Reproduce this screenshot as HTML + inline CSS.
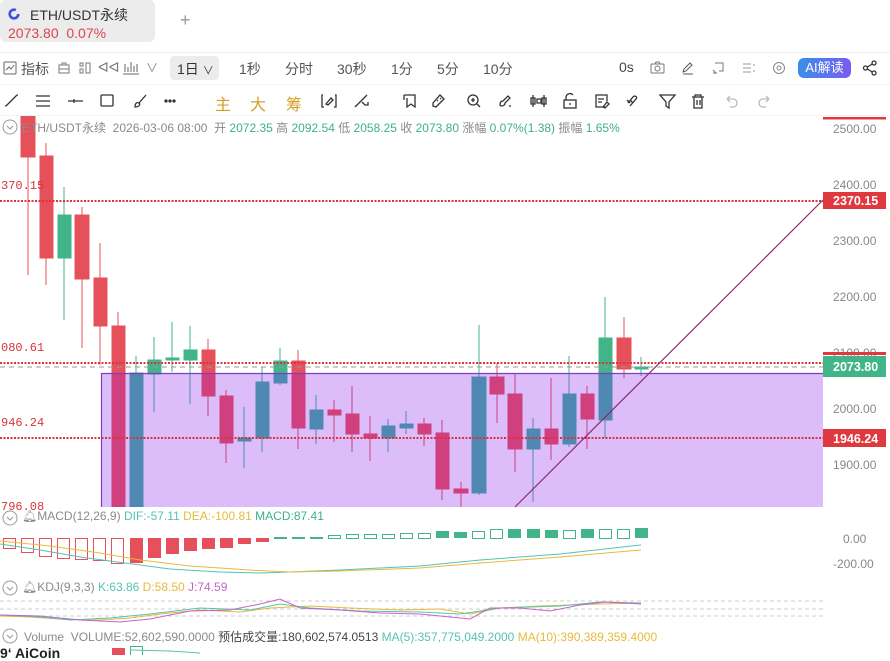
<!DOCTYPE html>
<html><head><meta charset="utf-8"><style>
*{margin:0;padding:0;box-sizing:border-box}
body{width:890px;height:655px;overflow:hidden;background:#fff;font-family:"Liberation Sans","Noto Sans CJK SC",sans-serif;position:relative}
.a{position:absolute;white-space:nowrap}
.tb{font-size:14px;color:#555}
.g{color:#3fb08a}.gr{color:#8a8a8a}
</style></head><body>
<div class="a" style="left:0;top:0;width:155px;height:42px;background:#ececec;border-radius:6px"></div>
<svg class="a" style="left:8px;top:8px" width="12" height="12" viewBox="0 0 12 12"><circle cx="6" cy="6" r="4.3" fill="none" stroke="#3a56d8" stroke-width="2.6" stroke-dasharray="22 5"/></svg>
<div class="a" style="left:30px;top:5px;font-size:14px;color:#333">ETH/USDT永续</div>
<div class="a" style="left:8px;top:25px;font-size:14px;color:#e0434d">2073.80&nbsp; 0.07%</div>
<div class="a" style="left:180px;top:10px;font-size:18px;color:#999">+</div>
<div class="a" style="left:0;top:52px;width:890px;height:1px;background:#f0f0f0"></div>

<!-- row1 -->
<svg class="a" style="left:3px;top:61px" width="14" height="14" viewBox="0 0 14 14" fill="none" stroke="#666"><rect x="1" y="1" width="12" height="12" rx="1"/><path d="M3 9l3-3 2 2 3-4"/></svg>
<div class="a tb" style="left:21px;top:59px">指标</div>
<svg class="a" style="left:58px;top:62px" width="12" height="12" fill="none" stroke="#777"><rect x="1" y="3" width="10" height="8"/><path d="M4 3V1h4v2M1 7h10"/></svg>
<svg class="a" style="left:79px;top:62px" width="12" height="12" fill="none" stroke="#777"><rect x="1" y="1" width="3" height="3"/><rect x="1" y="7" width="3" height="4"/><rect x="7" y="1" width="4" height="10"/></svg>
<div class="a" style="left:98px;top:59px;font-size:14px;color:#777">ᐊᐊ</div>
<svg class="a" style="left:122px;top:60px" width="18" height="16" fill="none" stroke="#666"><path d="M1 14h16M3 12V4M6 12V7M9 12V2M12 12V6M15 12V4"/></svg>
<div class="a" style="left:146px;top:59px;font-size:12px;color:#888">∨</div>
<div class="a" style="left:170px;top:56px;width:49px;height:24px;background:#ececec;border-radius:4px"></div>
<div class="a tb" style="left:177px;top:59px;color:#333">1日 <span style="font-size:11px">∨</span></div>
<div class="a tb" style="left:239px;top:59px">1秒</div>
<div class="a tb" style="left:285px;top:59px">分时</div>
<div class="a tb" style="left:337px;top:59px">30秒</div>
<div class="a tb" style="left:391px;top:59px">1分</div>
<div class="a tb" style="left:437px;top:59px">5分</div>
<div class="a tb" style="left:483px;top:59px">10分</div>
<div class="a tb" style="left:619px;top:59px;color:#444">0s</div>
<svg class="a" style="left:650px;top:61px" width="15" height="13" fill="none" stroke="#777"><rect x="1" y="3" width="13" height="9" rx="1"/><circle cx="7.5" cy="7.5" r="2.5"/><path d="M5 3l1-2h3l1 2"/></svg>
<svg class="a" style="left:681px;top:61px" width="14" height="14" fill="none" stroke="#555"><path d="M2 11l1-3 6-6 2 2-6 6zM2 13h10"/></svg>
<svg class="a" style="left:711px;top:61px" width="14" height="14" fill="none" stroke="#777"><path d="M4 2h8v8H8M2 9l3 3M2 12h4"/></svg>
<svg class="a" style="left:742px;top:62px" width="14" height="12" fill="none" stroke="#999"><path d="M1 2h8M1 6h8M1 10h8M12 2v2M12 8v2"/></svg>
<svg class="a" style="left:772px;top:61px" width="14" height="14" fill="none" stroke="#888"><circle cx="7" cy="7" r="5.5"/><circle cx="7" cy="7" r="2"/></svg>
<div class="a" style="left:798px;top:58px;width:53px;height:20px;border-radius:6px;background:linear-gradient(90deg,#3a8ee8,#7a5cf0);color:#fff;font-size:13px;line-height:20px;text-align:center">AI解读</div>
<svg class="a" style="left:862px;top:60px" width="16" height="16" fill="none" stroke="#333" stroke-width="1.3"><circle cx="3.5" cy="8" r="2"/><circle cx="12" cy="3" r="2"/><circle cx="12" cy="13" r="2"/><path d="M5.3 7l5-3M5.3 9l5 3"/></svg>
<div class="a" style="left:0;top:84px;width:890px;height:1px;background:#f3f3f3"></div>

<!-- row2 -->
<svg class="a" style="left:0;top:90px" width="890" height="22" fill="none" stroke="#333" stroke-width="1.3">
<path d="M6 16L17 5M5 16h1M17 5h1"/>
<path d="M36 6h14M36 11h14M36 16h14"/>
<path d="M68 11h15M74 9v4"/>
<rect x="101" y="5" width="12" height="11" rx="1"/>
<path d="M135 17c0-4 2-5 4-4s0 4-4 4zM139 13l7-8"/>
<circle cx="166" cy="11" r="1" fill="#333"/><circle cx="170" cy="11" r="1" fill="#333"/><circle cx="174" cy="11" r="1" fill="#333"/>
<path d="M323 5h-1v12h2M335 5h1v12h-2M326 14l5-6 2 2-5 5z"/>
<path d="M355 17l12-12M362 12l3 3h3v-3"/>
<path d="M404 5v5M404 5h11v12l-4-3-4 3V8"/>
<path d="M433 13l7-8 4 4-8 8-3-1zM437 10l1 1M440 8l1 1"/>
<circle cx="473" cy="10" r="5"/><path d="M477 14l3 3M471 10h4M473 8v4"/>
<path d="M500 15c0-3 1-4 3-4l5-5 2 2-5 5c0 2-1 3-4 3zM509 16h2"/>
<path d="M533 5v12M544 5v12M531 8h4v6h-4zM542 8h4v6h-4zM537 9h4v4h-4z"/>
<rect x="564" y="10" width="12" height="8"/><path d="M566 10V7a4 4 0 0 1 7-2M570 13v2"/>
<path d="M605 17h-9V5h11v6M598 9h6M598 12h4M603 17l4-5 2 2-4 4z"/>
<path d="M628 13l5-6c2-2 5 0 3 2l-6 7M633 13l-3-3M627 10l3 3"/>
<path d="M660 5h15l-6 7v6l-3-2v-4z"/>
<path d="M692 7h12M695 7V5h6v2M694 7v11h8V7M697 10v5M700 10v5"/>
<path stroke="#bbb" d="M727 9h6a4 4 0 0 1 0 8h-3M727 9l3-3M727 9l3 3"/>
<path stroke="#bbb" d="M769 9h-6a4 4 0 0 0 0 8h3M769 9l-3-3M769 9l-3 3"/>
</svg>
<div class="a" style="left:215px;top:91px;font-size:16px;color:#d4a02a">主</div>
<div class="a" style="left:250px;top:91px;font-size:16px;color:#d4a02a">大</div>
<div class="a" style="left:286px;top:91px;font-size:16px;color:#d4a02a">筹</div>
<div class="a" style="left:0;top:115px;width:890px;height:1px;background:#f3f3f3"></div>

<!-- chart -->
<svg class="a" style="left:0;top:0" width="890" height="655">
<defs>
<clipPath id="bx"><rect x="101" y="373" width="722" height="134"/></clipPath>
<clipPath id="pl"><rect x="0" y="116" width="823" height="391"/></clipPath>
<g id="cs" clip-path="url(#pl)">
<g style="fill:var(--r);stroke:var(--r)">
<path d="M28 110V275M46 143V285M82 207V348M100 243V365M118 312V508M208 339V416M226 390V463M298 350V449M334 400V442M352 386V452M370 416V461M424 418V446M442 420V500M461 482V508M497 363V423M515 373V472M551 378V460M587 386V449M624 317V378" fill="none"/>
<rect x="21" y="110" width="14" height="47"/><rect x="40" y="156" width="13" height="102"/><rect x="75" y="215" width="14" height="64"/><rect x="94" y="278" width="13" height="48"/><rect x="112" y="326" width="13" height="182"/><rect x="202" y="350" width="13" height="46"/><rect x="220" y="396" width="13" height="47"/><rect x="292" y="361" width="13" height="67"/><rect x="328" y="410" width="13" height="5"/><rect x="346" y="414" width="13" height="20"/><rect x="364" y="434" width="13" height="4"/><rect x="418" y="424" width="13" height="10"/><rect x="436" y="433" width="13" height="56"/><rect x="454" y="489" width="14" height="4"/><rect x="490" y="377" width="14" height="17"/><rect x="508" y="394" width="14" height="55"/><rect x="545" y="429" width="13" height="15"/><rect x="581" y="394" width="13" height="25"/><rect x="617" y="338" width="14" height="31"/>
</g>
<g style="fill:var(--g);stroke:var(--g)">
<path d="M64 187V320M136 356V508M154 337V412M172 322V372M190 326V404M244 407V468M262 367V452M280 348V385M316 395V444M388 419V452M406 411V434M479 325V495M533 418V502M569 356V447M605 297V438M641 357V376" fill="none"/>
<rect x="58" y="215" width="13" height="43"/><rect x="130" y="373" width="13" height="135"/><rect x="148" y="360" width="13" height="14"/><rect x="166" y="358" width="13" height="2"/><rect x="184" y="350" width="13" height="10"/><rect x="238" y="438" width="13" height="3"/><rect x="256" y="382" width="13" height="56"/><rect x="274" y="361" width="13" height="22"/><rect x="310" y="410" width="13" height="19"/><rect x="382" y="426" width="13" height="12"/><rect x="400" y="424" width="13" height="4"/><rect x="472" y="377" width="14" height="116"/><rect x="527" y="429" width="13" height="20"/><rect x="563" y="394" width="13" height="50"/><rect x="599" y="338" width="13" height="82"/><rect x="635" y="367" width="13" height="2"/>
</g>
</g>
</defs>
<rect x="101" y="373" width="722" height="134" fill="#dcbdfa"/>
<use href="#cs" style="--r:#e5505a;--g:#41b48a"/>
<g clip-path="url(#bx)"><use href="#cs" style="--r:#d0407f;--g:#4f89b3"/></g>
<path d="M101 373.5H823M101.5 373V507" stroke="#7d3cc2" stroke-width="1.2"/>
<g stroke="#d9343d" stroke-width="2" stroke-dasharray="2 1.5"><path d="M0 201H823M0 363H823M0 438H823"/></g>
<path d="M0 367H823" stroke="#999" stroke-dasharray="5 4"/>
<path d="M515 507L823 200" stroke="#8d2a6a" stroke-width="1.2"/>
<g font-family="Liberation Mono,monospace" font-size="12" fill="#d9343d"><text x="1" y="189">370.15</text><text x="1" y="351">080.61</text><text x="1" y="426">946.24</text><text x="1" y="510">796.08</text></g>
<!-- axis -->
<rect x="823" y="117" width="63" height="2.5" fill="#e0383f"/>
<g font-size="12" fill="#888"><text x="833" y="133">2500.00</text><text x="833" y="189">2400.00</text><text x="833" y="245">2300.00</text><text x="833" y="301">2200.00</text><text x="833" y="357">2100.00</text><text x="833" y="413">2000.00</text><text x="833" y="469">1900.00</text><text x="843" y="543">0.00</text><text x="833" y="568">-200.00</text></g>
<rect x="823" y="192" width="63" height="17" fill="#e0383f"/><text x="833" y="205" font-size="12.5" font-weight="bold" fill="#fff">2370.15</text>
<rect x="823" y="352" width="63" height="3" fill="#e0383f"/>
<rect x="823" y="356" width="63" height="21" fill="#41b48a"/><text x="833" y="371" font-size="12.5" font-weight="bold" fill="#fff">2073.80</text>
<rect x="823" y="429" width="63" height="18" fill="#e0383f"/><text x="833" y="443" font-size="12.5" font-weight="bold" fill="#fff">1946.24</text>
<!-- MACD -->
<g fill="none" stroke="#e5505a"><rect x="3.5" y="538.5" width="12" height="10"/><rect x="21.5" y="538.5" width="12" height="14"/><rect x="39.5" y="538.5" width="12" height="18"/><rect x="57.5" y="538.5" width="12" height="20"/><rect x="75.5" y="538.5" width="12" height="21"/><rect x="93.5" y="538.5" width="12" height="22"/><rect x="111.5" y="538.5" width="12" height="25"/></g>
<g fill="#e5505a"><rect x="130" y="538" width="13" height="25"/><rect x="148" y="538" width="13" height="20"/><rect x="166" y="538" width="13" height="16"/><rect x="184" y="538" width="13" height="13"/><rect x="202" y="538" width="13" height="11"/><rect x="220" y="538" width="13" height="10"/><rect x="238" y="538" width="13" height="6"/><rect x="256" y="538" width="13" height="4"/></g>
<g fill="#41b48a"><rect x="274" y="537" width="13" height="2"/><rect x="292" y="537" width="13" height="2"/><rect x="310" y="537" width="13" height="2"/><rect x="436" y="531" width="13" height="7"/><rect x="454" y="532" width="13" height="6"/><rect x="508" y="529" width="13" height="9"/><rect x="527" y="529" width="13" height="9"/><rect x="545" y="530" width="13" height="8"/><rect x="581" y="529" width="13" height="9"/><rect x="635" y="528" width="13" height="10"/></g>
<g fill="none" stroke="#41b48a"><rect x="328.5" y="535.5" width="12" height="3"/><rect x="346.5" y="534.5" width="12" height="4"/><rect x="364.5" y="534.5" width="12" height="4"/><rect x="382.5" y="534.5" width="12" height="4"/><rect x="400.5" y="533.5" width="12" height="5"/><rect x="418.5" y="533.5" width="12" height="5"/><rect x="472.5" y="531.5" width="12" height="7"/><rect x="490.5" y="529.5" width="12" height="9"/><rect x="563.5" y="530.5" width="12" height="8"/><rect x="599.5" y="529.5" width="12" height="9"/><rect x="617.5" y="529.5" width="12" height="9"/></g>
<path d="M0 544L40 550 80 557 125 563 170 569 220 572 260 573 290 572 340 570 420 566 480 560 560 554 641 545" fill="none" stroke="#56c3b0"/>
<path d="M0 541L50 546 100 553 140 560 190 566 250 570 290 572 340 571 420 568 480 563 560 557 641 550" fill="none" stroke="#e8b93c"/>
<!-- KDJ -->
<g stroke="#ccc" stroke-dasharray="4 3"><path d="M0 601H823M0 609H823M0 616H823"/></g>
<path d="M0 616L30 617 60 619 100 620 130 618 160 614 200 610 240 612 270 608 310 606 350 608 400 610 440 609 470 614 500 608 540 606 600 604 641 603" fill="none" stroke="#e8b93c"/>
<path d="M0 615L40 617 70 620 110 618 150 614 200 608 250 610 280 604 310 608 360 611 420 612 460 614 500 608 560 606 600 602 641 603" fill="none" stroke="#56c3b0"/>
<path d="M0 615L40 616 80 620 120 622 150 619 190 611 230 610 260 604 280 599 300 608 340 610 380 613 420 614 450 617 470 619 490 608 520 608 550 611 580 605 605 602 625 603 641 604" fill="none" stroke="#c565c5"/>
<!-- volume bits -->
<rect x="112" y="648" width="13" height="7" fill="#e5505a"/><rect x="130.5" y="646.5" width="12" height="9" fill="none" stroke="#41b48a"/><path d="M130 650L170 651 200 653" stroke="#56c3b0" fill="none"/>
</svg>
<!-- headers -->
<svg class="a" style="left:2px;top:119px" width="16" height="16" fill="none" stroke="#999"><circle cx="8" cy="8" r="7"/><path d="M5 7l3 3 3-3"/></svg>
<div class="a" style="left:22px;top:119px;font-size:12px" ><span class="gr">ETH/USDT永续&nbsp; 2026-03-06 08:00&nbsp; 开 </span><span class="g">2072.35</span><span class="gr"> 高 </span><span class="g">2092.54</span><span class="gr"> 低 </span><span class="g">2058.25</span><span class="gr"> 收 </span><span class="g">2073.80</span><span class="gr"> 涨幅 </span><span class="g">0.07%(1.38)</span><span class="gr"> 振幅 </span><span class="g">1.65%</span></div>
<svg class="a" style="left:2px;top:510px" width="16" height="16" fill="none" stroke="#999"><circle cx="8" cy="8" r="7"/><path d="M5 7l3 3 3-3"/></svg>
<div class="a" style="left:22px;top:509px;font-size:12px"><span class="gr">🔔︎MACD(12,26,9)</span> <span style="color:#56c3b0">DIF:-57.11</span> <span style="color:#e8b93c">DEA:-100.81</span> <span class="g">MACD:87.41</span></div>
<svg class="a" style="left:2px;top:580px" width="16" height="16" fill="none" stroke="#999"><circle cx="8" cy="8" r="7"/><path d="M5 7l3 3 3-3"/></svg>
<div class="a" style="left:22px;top:580px;font-size:12px"><span class="gr">🔔︎KDJ(9,3,3)</span> <span style="color:#56c3b0">K:63.86</span> <span style="color:#e8b93c">D:58.50</span> <span style="color:#c565c5">J:74.59</span></div>
<svg class="a" style="left:2px;top:628px" width="16" height="16" fill="none" stroke="#999"><circle cx="8" cy="8" r="7"/><path d="M5 7l3 3 3-3"/></svg>
<div class="a" style="left:24px;top:628px;font-size:12px"><span class="gr">Volume&nbsp; VOLUME:52,602,590.0000</span> <span style="color:#444">预估成交量:180,602,574.0513</span> <span style="color:#56c3b0">MA(5):357,775,049.2000</span> <span style="color:#e8b93c">MA(10):390,389,359.4000</span></div>
<div class="a" style="left:0;top:645px;font-size:14px;font-weight:bold;color:#222">9‘ AiCoin</div>
</body></html>
